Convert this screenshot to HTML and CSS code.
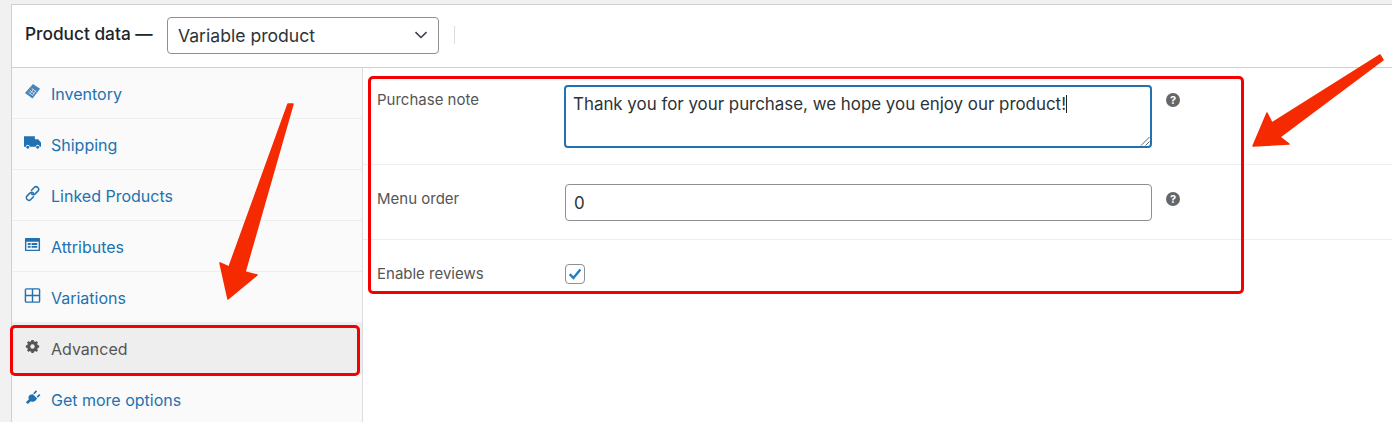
FILE: index.html
```html
<!DOCTYPE html>
<html>
    <head>
        <meta name="viewport" content="width=device-width"/>
        <title>Product data</title>
        <link rel="stylesheet" href="styles.css">
    </head>
    <body>
        <div class="panel">
            <div class="panel-head">
                <span class="panel-title">Product data —</span>
                <div class="select">
                    Variable product
                    <svg class="chevron" width="14" height="8" viewBox="0 0 14 8"><path d="M1.5 1.2 7 6.5l5.5-5.3" fill="none" stroke="#3c434a" stroke-width="1.6"/></svg>
                </div>
                <i class="head-divider"></i>
            </div>
            <div class="panel-body">
                <ul class="tabs">
                    <li class="tab">
                        <svg class="tab-icon" viewBox="0 0 18 18"><path d="M9.500 1 17 6 9 16.500 1 10.500z" fill="currentColor" opacity=".85"/><path d="M6 7.500l5 3.800M4.600 9.600l5 3.800M8 5.500l5 3.800M6.500 11.500l3.500-5M9 13l3.500-5" stroke="#fafafa" stroke-width=".7"/></svg>
                        Inventory
                    </li>
                    <li class="tab">
                        <svg class="tab-icon" viewBox="0 0 18 18"><path d="M0 2.500h11.500v3H15l3 3.500v4.500h-1.500a2 2 0 0 0-4 0H6a2 2 0 0 0-4 0H0z" fill="currentColor"/><circle cx="4" cy="14" r="1.500" fill="currentColor"/><circle cx="14.500" cy="14" r="1.500" fill="currentColor"/></svg>
                        Shipping
                    </li>
                    <li class="tab">
                        <svg class="tab-icon" viewBox="0 0 18 18"><g fill="none" stroke="currentColor" stroke-width="1.600" stroke-linecap="round"><path d="M8 5.500l2.800-2.800a2.700 2.700 0 0 1 3.900 3.800l-2.900 2.900a2.700 2.700 0 0 1-3.800 0"/><path d="M10 12.500l-2.800 2.800a2.700 2.700 0 0 1-3.900-3.800l2.900-2.900a2.700 2.700 0 0 1 3.800 0"/></g></svg>
                        Linked Products
                    </li>
                    <li class="tab">
                        <svg class="tab-icon" viewBox="0 0 18 18"><path d="M2 2h14a1 1 0 0 1 1 1v12a1 1 0 0 1-1 1H2a1 1 0 0 1-1-1V3a1 1 0 0 1 1-1zm.5 4v8.500h13V6z" fill="currentColor" fill-rule="evenodd"/><path d="M4 7.500h3v2H4zM4 10.500h3v2H4zM8 7.500h6v2H8zM8 10.500h6v2H8z" fill="currentColor"/></svg>
                        Attributes
                    </li>
                    <li class="tab">
                        <svg class="tab-icon" viewBox="0 0 18 18"><path d="M2.500 2h13a1 1 0 0 1 1 1v12a1 1 0 0 1-1 1h-13a1 1 0 0 1-1-1V3a1 1 0 0 1 1-1zM9 2v14M1.500 9h15" fill="none" stroke="currentColor" stroke-width="1.500"/></svg>
                        Variations
                    </li>
                    <li class="tab tab-active">
                        <svg class="tab-icon" viewBox="0 0 18 18"><circle cx="9" cy="9" r="4.200" fill="none" stroke="currentColor" stroke-width="3"/><path d="M9 9 9 2M9 9v7M9 9H2M9 9h7M9 9 4 4M9 9l5 5M9 9l5-5M9 9l-5 5" stroke="currentColor" stroke-width="2.600"/><circle cx="9" cy="9" r="2.300" fill="#eee"/></svg>
                        Advanced
                    </li>
                    <li class="tab">
                        <svg class="tab-icon" viewBox="0 0 18 18"><path d="M9.500 5.500l4.500 4.500-2 2.500c-1.500 1.200-3.300 1.200-4.700.4L4 16l-2-2 3.200-3.200C4.400 9.300 4.500 7.500 6.500 6z" fill="currentColor"/><path d="M10.500 5l2.700-3M14 8.500l2.800-2.500" stroke="currentColor" stroke-width="1.800"/></svg>
                        Get more options
                    </li>
                </ul>
                <div class="fields">
                    <div class="field field-note">
                        <label class="field-label">Purchase note</label>
                        <div class="text-box text-area">
                            Thank you for your purchase, we hope you enjoy our product!<i class="caret"></i>
                            <svg class="grip" width="10" height="10" viewBox="0 0 10 10"><path d="M1 9.500 9.500 1M5.500 9.500l4-4" stroke="#555" stroke-width=".9"/></svg>
                        </div>
                        <span class="help">?</span>
                    </div>
                    <div class="field field-order">
                        <label class="field-label">Menu order</label>
                        <div class="text-box text-input">0</div>
                        <span class="help">?</span>
                    </div>
                    <div class="field field-reviews">
                        <label class="field-label">Enable reviews</label>
                        <div class="checkbox">
                            <svg width="14" height="14" viewBox="0 0 14 14"><path d="M1.800 7.200 5.400 11 12.400 2.500" fill="none" stroke="#1f7fc0" stroke-width="2.400"/></svg>
                        </div>
                    </div>
                </div>
            </div>
        </div>

        <!-- annotations on top of the screenshot -->
        <div class="mark mark-tab"></div>
        <div class="mark mark-fields"></div>
        <svg class="arrows" width="1392" height="422" viewBox="0 0 1392 422">
            <path d="M288 104 293 104 245 272 257 275 228 299 220 263 229 267z" fill="#f62a00" stroke="#f62a00" stroke-width="1.500" stroke-linejoin="round"/>
            <path d="M1380 55 1383 60 1280 137 1289 144 1253 146 1267 113 1272 123z" fill="#f62a00" stroke="#f62a00" stroke-width="1.500" stroke-linejoin="round"/>
        </svg>
    </body>
</html>
```

FILE: styles.css
```css
html, body {
    height: 100%;
}
body {
    position: relative;
    margin: 0;
    padding: 4px 0 0 11px;
    box-sizing: border-box;
    overflow: hidden;
    background: #f1f1f1;
    font-family: Inter, "Liberation Sans", sans-serif;
    color: #555;
}
.panel {
    height: 418px;
    box-sizing: border-box;
    border-left: 1px solid #ccd0d4;
    border-top: 1px solid #ccd0d4;
    background: #fff;
}

/* head */
.panel-head {
    display: flex;
    align-items: center;
    height: 63px;
    box-sizing: border-box;
    padding-left: 13px;
    border-bottom: 1px solid #ccd0d4;
}
.panel-title {
    width: 142px;
    margin-bottom: 6px;
    font-size: 17.3px;
    font-weight: 500;
    white-space: nowrap;
    color: #1d2327;
}
.select {
    display: flex;
    align-items: center;
    justify-content: space-between;
    width: 272px;
    height: 37px;
    box-sizing: border-box;
    margin-bottom: 2px;
    padding: 0 10px;
    border: 1px solid #8c8f94;
    border-radius: 4px;
    font-size: 17.6px;
    color: #2c3338;
}
.head-divider {
    width: 1px;
    height: 18px;
    margin: 0 0 3px 15px;
    background: #ddd;
}

/* tabs */
.panel-body {
    display: flex;
    height: 354px;
}
.tabs {
    width: 351px;
    flex: none;
    box-sizing: border-box;
    margin: 0;
    padding: 0;
    list-style: none;
    background: #fafafa;
    border-right: 1px solid #dcdcde;
}
.tab {
    display: flex;
    align-items: center;
    height: 51px;
    box-sizing: border-box;
    padding: 1px 0 0 12px;
    border-bottom: 1px solid #eee;
    font-size: 16px;
    color: #2271b1;
}
.tab-active {
    background: #eee;
    color: #555;
}
.tab-icon {
    width: 17px;
    height: 17px;
    margin: 0 10px 4px 0;
    flex: none;
}

/* fields */
.fields {
    flex: 1;
}
.field {
    display: grid;
    grid-template-columns: 187px 588px 1fr;
    box-sizing: border-box;
    padding-left: 14px;
    border-bottom: 1px solid #eee;
}
.field-note {
    height: 97px;
    padding-top: 17px;
}
.field-order {
    height: 75px;
    padding-top: 19px;
}
.field-reviews {
    padding-top: 24px;
    border-bottom: 0;
}
.field-label {
    font-size: 15px;
    line-height: 17px;
}
.field-note .field-label {
    margin-top: 6px;
}
.field-order .field-label {
    margin-top: 6px;
}
.field-reviews .field-label {
    margin-top: 1px;
}
.text-box {
    position: relative;
    box-sizing: border-box;
    border-radius: 4px;
    font-size: 16.9px;
    color: #2c3338;
}
.text-area {
    height: 63px;
    padding: 7px 7px;
    border: 2px solid #2271b1;
    line-height: 20px;
}
.text-input {
    width: 587px;
    height: 37px;
    margin-left: 1px;
    padding: 0 8px;
    border: 1px solid #8c8f94;
    line-height: 37px;
}
.caret {
    display: inline-block;
    width: 1px;
    height: 18px;
    background: #222;
    vertical-align: -3px;
}
.grip {
    position: absolute;
    right: 0;
    bottom: 0;
}
.help {
    width: 14px;
    height: 14px;
    margin: 8px 0 0 14px;
    border-radius: 50%;
    background: #666;
    font-size: 11px;
    font-weight: 700;
    line-height: 14px;
    text-align: center;
    color: #fff;
}
.checkbox {
    display: flex;
    align-items: center;
    justify-content: center;
    width: 20px;
    height: 20px;
    box-sizing: border-box;
    margin-left: 1px;
    border: 1px solid #8c8f94;
    border-radius: 4px;
    background: #fff;
}

/* annotations */
.mark {
    position: absolute;
    box-sizing: border-box;
    border: 3px solid #f50000;
    border-radius: 5px;
}
.mark-tab {
    left: 10px;
    top: 325px;
    width: 350px;
    height: 51px;
}
.mark-fields {
    left: 368px;
    top: 76px;
    width: 876px;
    height: 218px;
}
.arrows {
    position: absolute;
    left: 0;
    top: 0;
}
```
